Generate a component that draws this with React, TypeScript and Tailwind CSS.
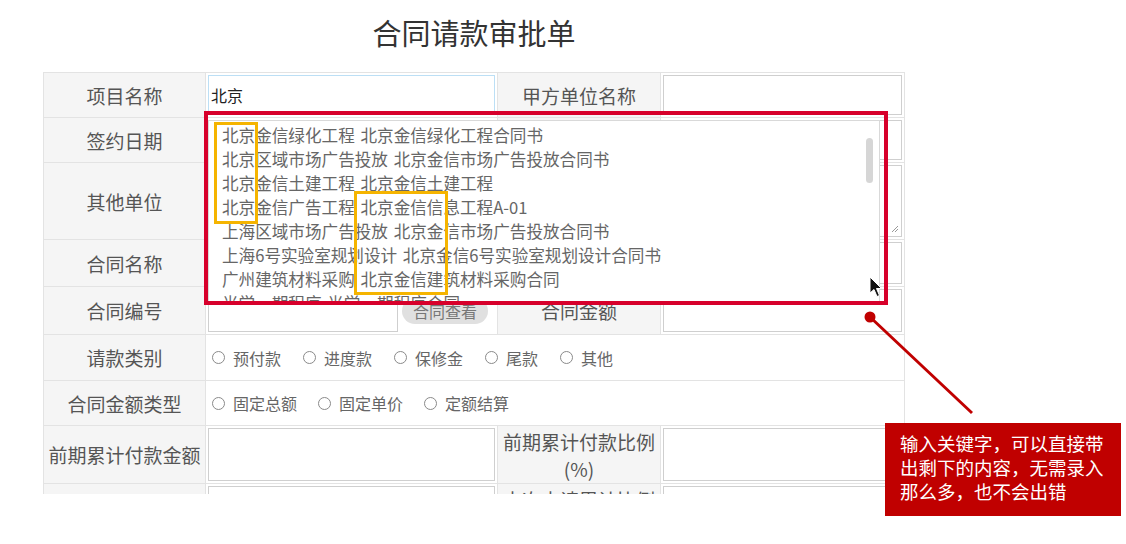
import React from "react";

const suggestions = [
  "北京金信绿化工程 北京金信绿化工程合同书",
  "北京区域市场广告投放 北京金信市场广告投放合同书",
  "北京金信土建工程 北京金信土建工程",
  "北京金信广告工程 北京金信信息工程A-01",
  "上海区域市场广告投放 北京金信市场广告投放合同书",
  "上海6号实验室规划设计 北京金信6号实验室规划设计合同书",
  "广州建筑材料采购 北京金信建筑材料采购合同",
  "光学一期程序 光学一期程序合同",
];

function Label({ children }: { children: React.ReactNode }) {
  return (
    <div className="flex items-center justify-center bg-[#f5f5f5] text-center text-[19px] leading-[27px] text-[#555]">
      {children}
    </div>
  );
}

function Field({ span, children, focus }: { span?: boolean; children?: React.ReactNode; focus?: boolean }) {
  return (
    <div className={span ? "col-span-3 bg-white p-[2px]" : "bg-white p-[2px]"}>
      <div
        className={
          focus
            ? "flex h-full items-center border border-[#bcdff5] pl-[2px] text-[16px] text-[#222]"
            : "flex h-full items-center border border-[#cfcfcf]"
        }
      >
        {children}
      </div>
    </div>
  );
}

function Radio({ label }: { label: string }) {
  return (
    <span className="flex items-center gap-[8px]">
      <span className="h-[13px] w-[13px] rounded-full border border-[#8a8a8a] bg-white" />
      <span>{label}</span>
    </span>
  );
}

export default function App() {
  return (
    <div className="relative h-[544px] w-[1126px] overflow-hidden bg-white font-['Noto_Sans_CJK_SC',sans-serif]">
      <div className="h-[494px] overflow-hidden pl-[43px]">
        <div className="w-[862px]">
          <div className="flex h-[72px] items-center justify-center pb-[6px] text-[29px] text-[#333]">
            合同请款审批单
          </div>

          <div className="grid grid-cols-[161px_291px_162px_243px] grid-rows-[44px_44px_76px_46px_47px_45px_44px_57px_57px] gap-px border border-[#e3e3e3] bg-[#e3e3e3]">
            <Label>项目名称</Label>
            <Field focus>北京</Field>
            <Label>甲方单位名称</Label>
            <Field />

            <Label>签约日期</Label>
            <Field />
            <Label>签约金额</Label>
            <Field />

            <Label>其他单位</Label>
            <div className="col-span-3 bg-white p-[2px]">
              <div className="relative h-full border border-[#cfcfcf]">
                <svg className="absolute bottom-[3px] right-[2px]" width="8" height="8" viewBox="0 0 8 8">
                  <path d="M1 7L7 1M4 7L7 4" stroke="#999" strokeWidth="1" />
                </svg>
              </div>
            </div>

            <Label>合同名称</Label>
            <Field span />

            <Label>合同编号</Label>
            <div className="flex items-center gap-[4px] bg-white p-[2px]">
              <div className="h-full w-[190px] border border-[#cfcfcf]" />
              <span className="flex h-[26px] w-[86px] items-center justify-center rounded-full bg-[#e0e0e0] text-[16px] text-[#777]">
                合同查看
              </span>
            </div>
            <Label>合同金额</Label>
            <Field />

            <Label>请款类别</Label>
            <div className="col-span-3 flex items-center gap-[22px] bg-white pl-[6px] text-[16px] text-[#666]">
              <Radio label="预付款" />
              <Radio label="进度款" />
              <Radio label="保修金" />
              <Radio label="尾款" />
              <Radio label="其他" />
            </div>

            <Label>合同金额类型</Label>
            <div className="col-span-3 flex items-center gap-[21px] bg-white pl-[6px] text-[16px] text-[#666]">
              <Radio label="固定总额" />
              <Radio label="固定单价" />
              <Radio label="定额结算" />
            </div>

            <Label>前期累计付款金额</Label>
            <Field />
            <Label>
              前期累计付款比例
              <br />
              (%)
            </Label>
            <Field />

            <Label>本次申请付款金额</Label>
            <Field />
            <Label>
              本次申请累计比例
              <br />
              (%)
            </Label>
            <Field />
          </div>
        </div>
      </div>

      {/* autocomplete list */}
      <div className="absolute left-[208px] top-[120px] h-[184px] w-[672px] overflow-hidden border border-[#d9d9d9] bg-white pl-[13px] pt-[2px] text-[16.6px] leading-[24px] text-[#666] [word-spacing:2px]">
        {suggestions.map((s) => (
          <div key={s} className="whitespace-nowrap">
            {s}
          </div>
        ))}
        <div className="absolute right-[6px] top-[17px] h-[45px] w-[7px] rounded-full bg-[#d6d6d6]" />
      </div>

      {/* annotation boxes */}
      <div className="absolute left-[204px] top-[111px] h-[194px] w-[684px] border-[4px] border-[#d7002b]" />
      <div className="absolute left-[214px] top-[122px] h-[102px] w-[44px] border-[3px] border-[#f5b400]" />
      <div className="absolute left-[354px] top-[191px] h-[104px] w-[94px] border-[3px] border-[#f5b400]" />

      <svg className="absolute left-[862px] top-[309px]" width="116" height="110" viewBox="0 0 116 110">
        <circle cx="8" cy="8" r="5.5" fill="#c00000" />
        <path d="M8 8L110 104" stroke="#c00000" strokeWidth="3" />
      </svg>

      <svg className="absolute left-[869px] top-[276px]" width="14" height="22" viewBox="0 0 14 22">
        <path d="M1 1L1 17L5 13.5L8 20.5L10.5 19.5L7.5 12.5L12.5 12.5Z" fill="#111" stroke="#fff" strokeWidth="1" />
      </svg>

      <div className="absolute left-[885px] top-[423px] h-[93px] w-[236px] bg-[#c00000] pl-[15px] pt-[8px] text-[18.5px] leading-[24px] text-white">
        输入关键字，可以直接带
        <br />
        出剩下的内容，无需录入
        <br />
        那么多，也不会出错
      </div>
    </div>
  );
}
